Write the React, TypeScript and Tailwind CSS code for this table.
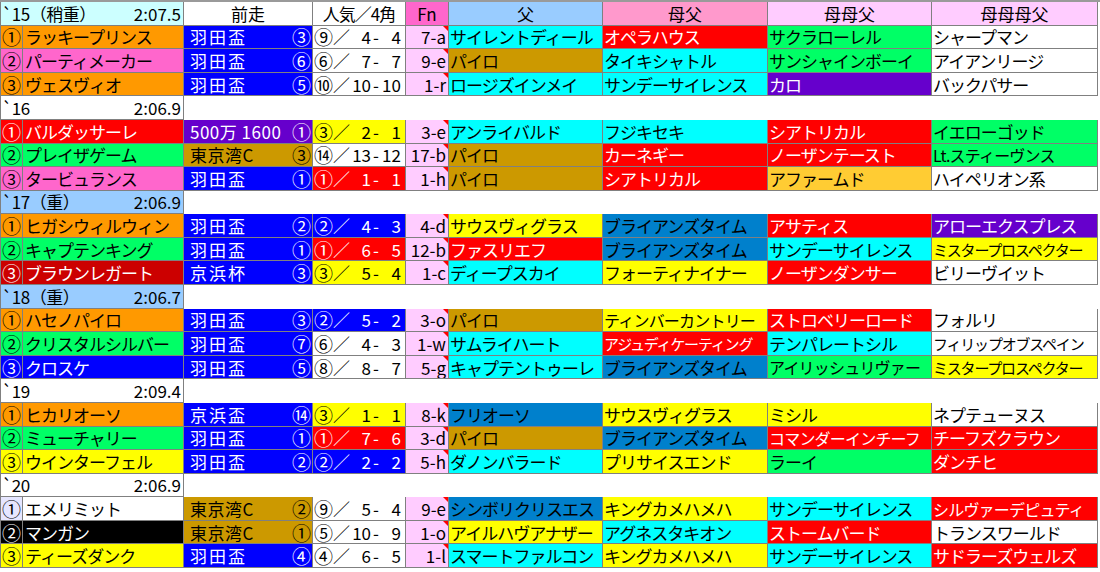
const tone: Record<string, string> = {
  W: 'bg-white text-black',
  O: 'bg-[#ff9900] text-black',
  P: 'bg-[#ff66cc] text-black',
  B: 'bg-[#0000ff] text-white',
  R: 'bg-[#ff0000] text-white',
  C: 'bg-[#00ffff] text-black',
  G: 'bg-[#00ff66] text-black',
  T: 'bg-[#cc9900] text-black',
  V: 'bg-[#6600cc] text-white',
  Y: 'bg-[#ffff00] text-black',
  A: 'bg-[#ffcc33] text-black',
  M: 'bg-[#0080cc] text-black',
  D: 'bg-[#cc0000] text-white',
  K: 'bg-black text-white',
  L: 'bg-[#e6e6ff] text-black',
  S: 'bg-[#99ccff] text-black',
  H: 'bg-[#ccffff] text-black',
}

// no|name|color|race|raceNo|raceColor|pop|c1|c2|popColor|fn|sire|c|bms|c|b2|c|b3|c|numColor?
const groups = [
  {
    label: '`15（稍重）', time: '2:07.5', bg: 'H',
    rows: [
      '①|ラッキープリンス|O|羽田盃|③|B|⑨|4|4|W|7-a|サイレントディール|C|オペラハウス|R|サクラローレル|G|シャープマン|W',
      '②|パーティメーカー|P|羽田盃|⑥|B|⑥|7|7|W|9-e|パイロ|T|タイキシャトル|C|サンシャインボーイ|G|アイアンリージ|W',
      '③|ヴェスヴィオ|O|羽田盃|⑤|B|⑩|10|10|W|1-r|ロージズインメイ|C|サンデーサイレンス|C|カロ|V|バックパサー|W',
    ],
  },
  {
    label: '`16', time: '2:06.9', bg: 'W',
    rows: [
      '①|バルダッサーレ|R|500万 1600|①|V|③|2|1|Y|3-e|アンライバルド|C|フジキセキ|C|シアトリカル|R|イエローゴッド|G',
      '②|プレイザゲーム|G|東京湾C|③|T|⑭|13|12|W|17-b|パイロ|T|カーネギー|R|ノーザンテースト|R|Lt.スティーヴンス|G',
      '③|タービュランス|P|羽田盃|①|B|①|1|1|R|1-h|パイロ|T|シアトリカル|R|アファームド|A|ハイペリオン系|W',
    ],
  },
  {
    label: '`17（重）', time: '2:06.9', bg: 'S',
    rows: [
      '①|ヒガシウィルウィン|O|羽田盃|②|B|②|4|3|B|4-d|サウスヴィグラス|Y|ブライアンズタイム|M|アサティス|R|アローエクスプレス|V',
      '②|キャプテンキング|G|羽田盃|①|B|①|6|5|R|12-b|ファスリエフ|R|ブライアンズタイム|M|サンデーサイレンス|C|ミスタープロスペクター|Y',
      '③|ブラウンレガート|D|京浜杯|③|B|③|5|4|Y|1-c|ディープスカイ|C|フォーティナイナー|Y|ノーザンダンサー|R|ビリーヴイット|W',
    ],
  },
  {
    label: '`18（重）', time: '2:06.7', bg: 'S',
    rows: [
      '①|ハセノパイロ|O|羽田盃|③|B|②|5|2|B|3-o|パイロ|T|ティンバーカントリー|Y|ストロベリーロード|R|フォルリ|W',
      '②|クリスタルシルバー|G|羽田盃|⑦|B|⑥|4|3|W|1-w|サムライハート|C|アジュディケーティング|R|テンパレートシル|C|フィリップオブスペイン|W',
      '③|クロスケ|B|羽田盃|⑤|B|⑧|8|7|W|5-g|キャプテントゥーレ|C|ブライアンズタイム|M|アイリッシュリヴァー|G|ミスタープロスペクター|Y',
    ],
  },
  {
    label: '`19', time: '2:09.4', bg: 'W',
    rows: [
      '①|ヒカリオーソ|O|京浜盃|⑭|B|③|1|1|Y|8-k|フリオーソ|M|サウスヴィグラス|Y|ミシル|Y|ネプテューヌス|W',
      '②|ミューチャリー|G|羽田盃|①|B|①|7|6|R|3-d|パイロ|T|ブライアンズタイム|M|コマンダーインチーフ|R|チーフズクラウン|R',
      '③|ウインターフェル|Y|羽田盃|②|B|②|2|2|B|5-h|ダノンバラード|C|プリサイスエンド|Y|ラーイ|G|ダンチヒ|R',
    ],
  },
  {
    label: '`20', time: '2:06.9', bg: 'W',
    rows: [
      '①|エメリミット|W|東京湾C|②|T|⑨|5|4|W|9-e|シンボリクリスエス|M|キングカメハメハ|Y|サンデーサイレンス|C|シルヴァーデピュティ|R|L',
      '②|マンガン|K|東京湾C|①|T|⑤|10|9|W|1-o|アイルハヴアナザー|Y|アグネスタキオン|C|ストームバード|R|トランスワールド|W',
      '③|ティーズダンク|Y|羽田盃|④|B|④|6|5|W|1-l|スマートファルコン|C|キングカメハメハ|Y|サンデーサイレンス|C|サドラーズウェルズ|R',
    ],
  },
]

const cell = 'border-r border-b border-[#808080] flex items-center overflow-hidden whitespace-nowrap'

function fit(text: string) {
  // long names get squeezed like the sheet's shrink-to-fit
  if (text.length >= 11) return 'text-[15px] tracking-[-1.2px]'
  if (text.length >= 10) return 'text-[16px] tracking-[-0.8px]'
  return 'text-[17px] tracking-[-1px]'
}

// circled numbers come out small in the CJK font, so bump them a little
function Circ({ n }: { n: string }) {
  return <span className="text-[19px] leading-none">{n}</span>
}

function Blood({ text, c }: { text: string; c: string }) {
  return <div className={`${cell} ${tone[c]} ${fit(text)} pl-[1px]`}>{text}</div>
}

function HorseRow({ line }: { line: string }) {
  const f = line.split('|')
  const numColor = f[19] || f[2]
  return (
    <>
      <div className={`${cell} ${tone[numColor]} border-l justify-center`}><Circ n={f[0]} /></div>
      <div className={`${cell} ${tone[f[2]]} ${fit(f[1])} pl-[2px]`}>{f[1]}</div>
      <div className={`${cell} ${tone[f[5]]} justify-between text-[17px] pl-[6px] pr-[1px]`}>
        <span className={f[3].length === 3 ? 'tracking-[2px]' : 'tracking-[0.5px]'}>{f[3]}</span>
        <Circ n={f[4]} />
      </div>
      <div className={`${cell} ${tone[f[9]]} text-[17px]`}>
        <span className="pl-[1px]"><Circ n={f[6]} /></span>
        <span>／</span>
        <span className="ml-auto flex pr-[6px]">
          <span className="w-[21px] text-right">{f[7]}</span>
          <span className="px-[2px]">-</span>
          <span className="w-[20px] text-right">{f[8]}</span>
        </span>
      </div>
      <div className={`${cell} relative bg-[#ffccff] text-black justify-end pr-[2px] text-[17px]`}>
        {f[10]}
        <span className="absolute right-0 top-0 border-t-[5px] border-l-[5px] border-t-[#ff0000] border-l-transparent" />
      </div>
      <Blood text={f[11]} c={f[12]} />
      <Blood text={f[13]} c={f[14]} />
      <Blood text={f[15]} c={f[16]} />
      <Blood text={f[17]} c={f[18]} />
    </>
  )
}

function YearCell({ label, time, bg }: { label: string; time: string; bg: string }) {
  return (
    <div className={`${cell} ${tone[bg]} col-span-2 border-l justify-between text-[17px] pl-[1px] pr-[2px]`}>
      <span className="tracking-[-0.5px]">{label}</span>
      <span>{time}</span>
    </div>
  )
}

export default function App() {
  const head = 'border-r border-b border-[#808080] flex items-center justify-center text-[17px] text-black'

  return (
    <div className="w-[1100px] h-[572px] bg-white overflow-hidden" style={{ fontFamily: '"Noto Sans CJK JP", "Noto Sans", sans-serif' }}>
      <div className="h-[2px] bg-[#9a9a9a]" />
      <div className="grid grid-cols-[23px_161px_129px_93px_43px_154px_165px_164px_166px] grid-rows-[repeat(24,minmax(0,1fr))] h-[566px] leading-none">
        {/* header row doubles as the 2015 label */}
        <YearCell label={groups[0].label} time={groups[0].time} bg={groups[0].bg} />
        <div className={`${head} bg-white`}>前走</div>
        <div className={`${head} bg-white tracking-[-1px]`}>人気／4角</div>
        <div className={`${head} bg-[#ff66cc]`}>Fn</div>
        <div className={`${head} bg-[#99ccff]`}>父</div>
        <div className={`${head} bg-[#ff99cc]`}>母父</div>
        <div className={`${head} bg-[#ffccff]`}>母母父</div>
        <div className={`${head} bg-[#ffccff]`}>母母母父</div>

        {groups.map((g, gi) => (
          <div key={g.label} className="contents">
            {gi > 0 && (
              <>
                <YearCell label={g.label} time={g.time} bg={g.bg} />
                <div className="col-span-7 bg-white" />
              </>
            )}
            {g.rows.map(r => <HorseRow key={r} line={r} />)}
          </div>
        ))}
      </div>
    </div>
  )
}
